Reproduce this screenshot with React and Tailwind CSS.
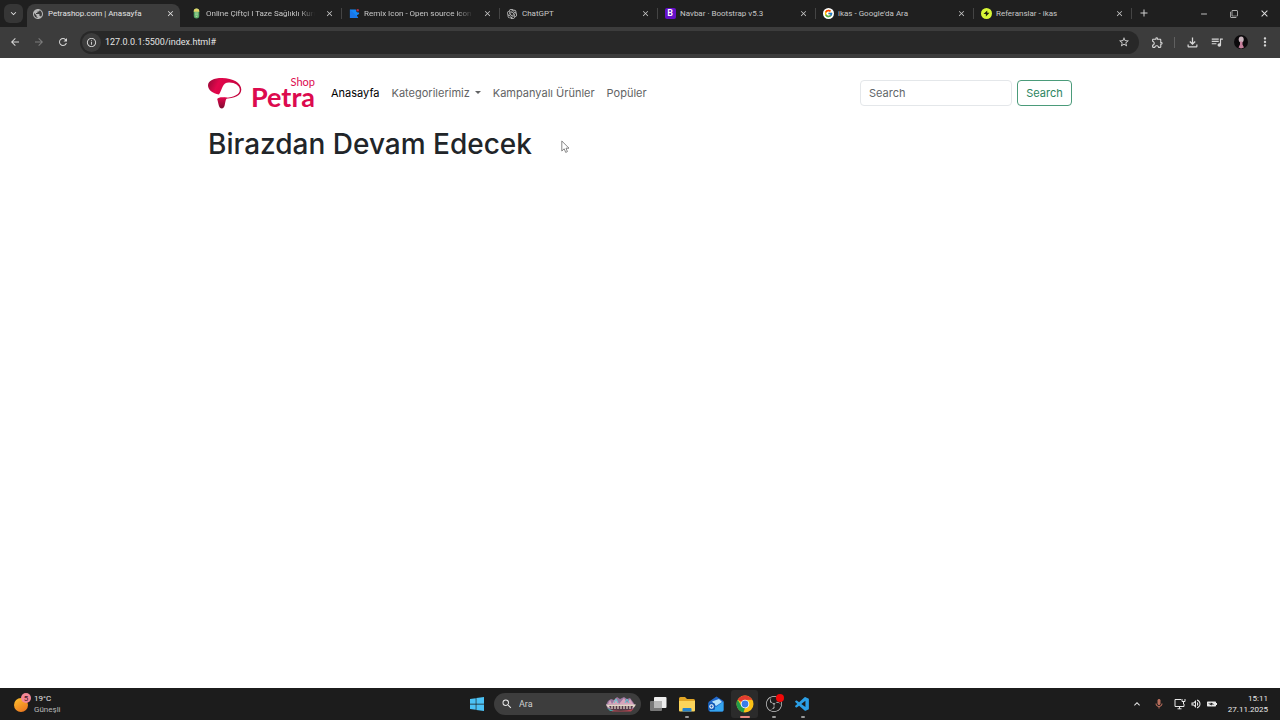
import { FaWindows } from 'react-icons/fa'
import { FcGoogle } from 'react-icons/fc'
import { SiObsstudio, SiOpenai } from 'react-icons/si'
import { VscVscode } from 'react-icons/vsc'
import {
  MdAdd, MdArrowBack, MdArrowForward, MdBatteryChargingFull, MdClose, MdFilterNone, MdInfoOutline,
  MdKeyboardArrowDown, MdKeyboardArrowUp, MdMoreVert, MdOutlineExtension, MdOutlineFileDownload,
  MdOutlineMic, MdOutlineVolumeUp, MdPublic, MdQueueMusic, MdRefresh, MdRemove, MdSearch, MdStarBorder,
} from 'react-icons/md'

function PearIcon() {
  return (
    <svg viewBox="0 0 12 12" className="size-[11px]" aria-hidden="true">
      <rect x="3" y="0.5" width="6" height="11" rx="3" fill="#58a967" />
      <path d="M3 4V3.5a3 3 0 0 1 6 0V4Z" fill="#e3d56b" />
      <path d="M4.4 5.5h3.2M4.4 7.5h3.2M5 9.4h2" stroke="#d5efb5" strokeWidth="0.8" />
    </svg>
  )
}

function RemixIcon() {
  return (
    <svg viewBox="0 0 12 12" className="size-[11px]" aria-hidden="true">
      <path d="M1 1.5h6.5C7.5 4 9 5 11 5v1.5L8.5 8l1.5 3H1Z" fill="#1687f5" />
      <path d="M1 1.5 8 8.5 10 11H1Z" fill="#1a76ea" />
      <circle cx="9.5" cy="2.4" r="1.4" fill="#a83245" />
    </svg>
  )
}

function BootstrapIcon() {
  return (
    <span className="flex size-[11px] items-center justify-center rounded-[2px] bg-[#6610c9] text-[9px] leading-none font-semibold text-white">
      B
    </span>
  )
}

function GoogleIcon() {
  return (
    <span className="flex size-[11px] items-center justify-center rounded-full bg-white">
      <FcGoogle className="size-[9px]" />
    </span>
  )
}

function IkasIcon() {
  return (
    <svg viewBox="0 0 12 12" className="size-[11px]" aria-hidden="true">
      <circle cx="6" cy="6" r="6" fill="#d9f936" />
      <path d="M6.8 2.6 2.8 6.5h2.5v2.7l4-3.900H6.8Z" fill="#1c2010" />
    </svg>
  )
}

const tabs = [
  { title: 'Petrashop.com | Anasayfa', icon: <MdPublic className="size-[12px] text-[#b8b8b8]" />, active: true },
  { title: 'Online Çiftçi I Taze Sağlıklı Kuru', icon: <PearIcon />, fade: true },
  { title: 'Remix Icon - Open source icon', icon: <RemixIcon />, fade: true },
  { title: 'ChatGPT', icon: <SiOpenai className="size-[10px] text-[#d5d5d5]" /> },
  { title: 'Navbar · Bootstrap v5.3', icon: <BootstrapIcon /> },
  { title: "ikas - Google'da Ara", icon: <GoogleIcon /> },
  { title: 'Referanslar - ikas', icon: <IkasIcon /> },
]

function Tab({ title, icon, active, fade }) {
  return (
    <div
      className={
        active
          ? 'mr-1 flex h-[23px] w-[153px] items-center rounded-t-lg bg-[#3c3c3c] pr-1 pb-1 pl-[5px] text-[#e3e3e3]'
          : 'flex h-[23px] w-[158px] items-center pr-[7px] pb-1 pl-[6px] text-[#c7c7c7]'
      }
    >
      <span className="flex w-3 shrink-0 justify-center">{icon}</span>
      <span
        className={
          fade
            ? 'ml-1 min-w-0 flex-1 mask-r-from-85% text-[8px] leading-[12px] whitespace-nowrap'
            : 'ml-1 min-w-0 flex-1 text-[8px] leading-[12px] whitespace-nowrap'
        }
      >
        {title}
      </span>
      <button type="button" aria-label={`Close ${title}`} className="ml-2 flex size-3 items-center justify-center">
        <MdClose className="size-[9px]" />
      </button>
      {!active && <span className="-mr-[7px] ml-[6px] h-[11px] w-px bg-[#444]" />}
    </div>
  )
}

function TabStrip() {
  return (
    <div className="flex h-[27px] items-end bg-[#1f1f1f]">
      <button
        type="button"
        aria-label="Search tabs"
        className="mr-1 mb-1 ml-1 flex h-[19px] w-[19px] items-center justify-center rounded-md bg-[#363636] text-[#e3e3e3]"
      >
        <MdKeyboardArrowDown className="size-[11px]" />
      </button>
      <div className="flex">
        {tabs.map((tab) => <Tab key={tab.title} {...tab} />)}
      </div>
      <button type="button" aria-label="New tab" className="mb-2 ml-[6px] text-[#d0d0d0]">
        <MdAdd className="size-3" />
      </button>
      <div className="mb-2 ml-auto flex items-center gap-[21px] pr-[10px] text-[#e0e0e0]">
        <button type="button" aria-label="Minimize"><MdRemove className="size-[10px]" /></button>
        <button type="button" aria-label="Restore"><MdFilterNone className="size-[8px]" /></button>
        <button type="button" aria-label="Close window"><MdClose className="size-[11px]" /></button>
      </div>
    </div>
  )
}

function Avatar() {
  return (
    <svg viewBox="0 0 14 14" className="size-[14px]" aria-hidden="true">
      <circle cx="7" cy="7" r="7" fill="#0c0a0c" />
      <ellipse cx="7.2" cy="4.5" rx="2.5" ry="2.9" fill="#c9b4bd" />
      <path d="M6 6.5h2.5v3L10 12.5 7 13.5l-2.500-1L6 9.5Z" fill="#c57f9b" />
    </svg>
  )
}

function Toolbar() {
  return (
    <div className="flex h-[31px] items-center bg-[#3c3c3c] px-2 pb-px text-[#d6d6d6]">
      <button type="button" aria-label="Back" className="flex w-6 pl-px"><MdArrowBack className="size-3" /></button>
      <button type="button" aria-label="Forward" className="flex w-6 pl-px text-[#7c7c7c]"><MdArrowForward className="size-3" /></button>
      <button type="button" aria-label="Reload" className="flex w-6 pl-px"><MdRefresh className="size-3" /></button>
      <div className="flex h-[23px] flex-1 items-center rounded-full bg-[#282828] pr-[9px] pl-[2px]">
        <span className="flex size-[19px] items-center justify-center rounded-full bg-[#3c3c3c]">
          <MdInfoOutline className="size-[11px]" />
        </span>
        <input
          aria-label="Address"
          defaultValue="127.0.0.1:5500/index.html#"
          className="ml-1 min-w-0 flex-1 bg-transparent text-[9px] leading-[14px] text-[#e3e3e3] outline-none"
        />
        <button type="button" aria-label="Bookmark"><MdStarBorder className="size-3" /></button>
      </div>
      <div className="flex items-center pl-3">
        <button type="button" aria-label="Extensions"><MdOutlineExtension className="size-[13px]" /></button>
        <span className="mr-[10px] ml-[10px] h-[11px] w-px bg-[#606060]" />
        <button type="button" aria-label="Downloads"><MdOutlineFileDownload className="size-[15px]" /></button>
        <button type="button" aria-label="Media" className="ml-[10px]"><MdQueueMusic className="size-[14px]" /></button>
        <button type="button" aria-label="Profile" className="ml-[10px]"><Avatar /></button>
        <button type="button" aria-label="Menu" className="ml-[10px]"><MdMoreVert className="size-[14px]" /></button>
      </div>
    </div>
  )
}

function Brand() {
  return (
    <a href="#" aria-label="Petra Shop" className="flex items-center text-[#dc0a4e]">
      <svg viewBox="0 0 34 32" className="h-8 w-[34px]" aria-hidden="true">
        <defs>
          <linearGradient id="petra" x1="0" y1="0" x2="1" y2="0.3">
            <stop offset="0" stopColor="#8f0b36" />
            <stop offset="0.35" stopColor="#e2074c" />
            <stop offset="1" stopColor="#c4053f" />
          </linearGradient>
          <linearGradient id="stem" x1="0" y1="0" x2="0" y2="1">
            <stop offset="0" stopColor="#e2074c" />
            <stop offset="1" stopColor="#7d0b30" />
          </linearGradient>
        </defs>
        <path d="M11 17.600C4.500 16 0 13 0 8.500 0 3.500 6 1 14 1c11 0 19.300 5 19.300 11.500 0 6-6.300 8.700-17.300 9.300l-2.500.6C14 20.500 15.500 20.800 18 20.700c8-.4 13.800-3.300 13.800-8C31.800 8.500 26.500 5.300 21 5.500c-7 .3-6 5.500-10 12.100Z" fill="url(#petra)" />
        <path d="M9.200 22c1.300-1.800 5-2 10-1.200-3 2.400-1.200 10.700-5.200 10.700-3.500 0-3.300-5-4.800-9.500Z" fill="url(#stem)" />
      </svg>
      <span className="ml-[9px] flex flex-col pb-[3px] font-['Lato'] font-bold">
        <span className="self-end text-[11px] leading-[11px] font-normal">Shop</span>
        <span className="text-[27px] leading-[19px]">Petra</span>
      </span>
    </a>
  )
}

function ShopHeader() {
  return (
    <nav className="flex flex-wrap items-center py-[10px] text-[11px] leading-4 text-[#626364]">
      <Brand />
      <ul className="ml-4 flex gap-3">
        <li><a href="#" aria-current="page" className="text-black">Anasayfa</a></li>
        <li>
          <button type="button" aria-haspopup="menu" className="flex items-center gap-[5px]">
            Kategorilerimiz
            <span className="border-x-[3px] border-t-[3px] border-x-transparent border-t-current" />
          </button>
        </li>
        <li><a href="#">Kampanyalı Ürünler</a></li>
        <li><a href="#">Popüler</a></li>
      </ul>
      <form className="ml-auto flex gap-[5px]" role="search" onSubmit={(event) => event.preventDefault()}>
        <input
          type="search"
          placeholder="Search"
          aria-label="Search"
          className="h-[26px] w-[152px] rounded-[4px] border border-[#e4e7ea] px-2 text-[#212529] outline-none placeholder:text-[#62666a]"
        />
        <button type="submit" className="h-[26px] w-[55px] rounded-[4px] border border-[#4b9b7a] text-[#2b8560]">Search</button>
      </form>
    </nav>
  )
}

function Pointer() {
  return (
    <svg viewBox="0 0 9 14" className="absolute top-[82px] left-[561px] h-[14px] w-[9px]" aria-hidden="true">
      <path d="M.8 1v10l2.400-2.200 1.500 3.600 1.700-.8L5 8.200h3Z" fill="#fff" stroke="#555" strokeWidth="0.7" />
    </svg>
  )
}

function ChromeIcon() {
  return (
    <svg viewBox="0 0 18 18" className="size-[18px]" aria-hidden="true">
      <circle cx="9" cy="9" r="8.5" fill="#fbc116" />
      <path d="M9 9 1.640 4.750A8.500 8.500 0 0 1 16.360 4.750L9 5Z" fill="#e43d30" />
      <path d="M1.640 4.750 5.500 11l3.500 2-1.500 4.400A8.500 8.500 0 0 1 1.640 4.750Z" fill="#229c4b" />
      <circle cx="9" cy="9" r="4.3" fill="#fff" />
      <circle cx="9" cy="9" r="3.4" fill="#3a7ce8" />
    </svg>
  )
}

function FolderIcon() {
  return (
    <svg viewBox="0 0 18 18" className="size-[18px]" aria-hidden="true">
      <path d="M1 3.500A1.500 1.500 0 0 1 2.500 2H7l2 2h6.500A1.500 1.500 0 0 1 17 5.500V9H1Z" fill="#e2a626" />
      <path d="M1 6h16v9.500a1 1 0 0 1-1 1H2a1 1 0 0 1-1-1Z" fill="#fbd45a" />
      <path d="M4.500 16.500V14a1 1 0 0 1 1-1h7a1 1 0 0 1 1 1v2.500Z" fill="#2683cc" />
    </svg>
  )
}

function MailIcon() {
  return (
    <svg viewBox="0 0 18 18" className="size-[18px]" aria-hidden="true">
      <path d="M1.500 7 9.500 1.500 16.500 6v9a1.500 1.500 0 0 1-1.500 1.500H3A1.500 1.500 0 0 1 1.500 15Z" fill="#2169cc" />
      <path d="M5 6.500 12 4l3 3-6 4Z" fill="#b7e4fb" />
      <path d="M1.500 8 9 12l7.500-5.500V15a1.500 1.500 0 0 1-1.500 1.500H3Z" fill="#35a5ef" />
      <rect x="1" y="8" width="7" height="7" rx="1.5" fill="#1059b4" />
      <circle cx="4.500" cy="11.500" r="1.700" fill="none" stroke="#fff" strokeWidth="1.1" />
    </svg>
  )
}

function TaskViewIcon() {
  return (
    <svg viewBox="0 0 18 18" className="size-[18px]" aria-hidden="true">
      <rect x="1" y="6" width="12" height="10" rx="1" fill="#777" />
      <rect x="5" y="2" width="12.500" height="11" rx="1" fill="#eee" />
      <path d="M5 6h8v7H5Z" fill="#b8b8b8" />
    </svg>
  )
}

function ObsIcon() {
  return (
    <span className="relative flex">
      <SiObsstudio className="size-4 text-[#c9c9c9]" />
      <span className="absolute -top-[2px] -right-[2px] size-2 rounded-full bg-[#f10808]" />
    </span>
  )
}

function SkylineIcon() {
  return (
    <svg viewBox="0 0 32 16" className="h-4 w-8" aria-hidden="true">
      <path d="M1 9 3 5l3-2 3 1 3-3 3 2 4-2 3 2 3-1 3 4 2 3-2 4H3Z" fill="#98779f" />
      <path d="M3 8 5 4l2 4 4-6 3 6 5-6 3 5 3-4 4 6Z" fill="#d7a4bb" />
      <path d="M9 7l2-4 2 4M20 7l2-4 2 4" stroke="#5cc5d0" strokeWidth="1" fill="none" />
      <path d="M1 8.500h30l-2 3H3Z" fill="#e4d6c8" />
      <path d="M4 10h24l-2 4H7Z" fill="#543847" />
      <path d="M7 10v3M10 10v3M13 10v3M16 10v3M19 10v3M22 10v3M25 10v3" stroke="#eadbd1" strokeWidth="1.2" />
      <path d="M3 12.500c6 3 19 3 26 0l-3 3H7Z" fill="#b74552" />
      <path d="m2 12 3 3h4Z" fill="#42a6a9" />
    </svg>
  )
}

const apps = [
  { name: 'Task view', icon: <TaskViewIcon /> },
  { name: 'File Explorer', icon: <FolderIcon />, mark: 'bg-[#999]' },
  { name: 'Mail', icon: <MailIcon /> },
  { name: 'Chrome', icon: <ChromeIcon />, mark: 'bg-[#e88a80]', active: true },
  { name: 'OBS Studio', icon: <ObsIcon />, mark: 'bg-[#999]' },
  { name: 'Visual Studio Code', icon: <VscVscode className="size-[17px] text-[#2b9fe6]" />, mark: 'bg-[#999]' },
]

function WeatherIcon() {
  return (
    <svg viewBox="0 0 20 22" className="h-[22px] w-5" aria-hidden="true">
      <defs>
        <linearGradient id="sun" x1="0" y1="0" x2="0.6" y2="1">
          <stop offset="0" stopColor="#ffc22e" />
          <stop offset="1" stopColor="#ec7b20" />
        </linearGradient>
      </defs>
      <circle cx="8" cy="12" r="7" fill="url(#sun)" />
      <circle cx="13" cy="5" r="5" fill="#f38796" />
      <text x="13" y="8" textAnchor="middle" fontSize="8" fill="#40151c">5</text>
    </svg>
  )
}

function NetworkIcon() {
  return (
    <svg viewBox="0 0 12 12" className="size-3" fill="none" stroke="currentColor" aria-hidden="true">
      <path d="M7 1.500H1v7h9V6M3.500 10.800h4M5.500 8.500v2.300M9.500 6V4M8 1v2.500h3V1" />
    </svg>
  )
}

function Taskbar() {
  return (
    <footer className="grid h-8 grid-cols-[1fr_auto_1fr] items-center bg-[#1c1c1c] text-[8px] leading-[11px] text-[#e8e8e8]">
      <div className="flex items-center gap-px pl-[13px]">
        <WeatherIcon />
        <div>
          <div>19°C</div>
          <div className="text-[#b8b8b8]">Güneşli</div>
        </div>
      </div>
      <div className="flex items-center pl-[6px]">
        <button type="button" aria-label="Start" className="mr-[9px]"><FaWindows className="size-4 text-[#4cc2f5]" /></button>
        <label className="mr-[2px] flex h-[22px] w-[147px] items-center rounded-full bg-[#3d3d3d] pr-1 pl-[7px]">
          <MdSearch className="size-3 shrink-0" />
          <input
            aria-label="Ara"
            placeholder="Ara"
            className="ml-[6px] min-w-0 flex-1 bg-transparent text-[9px] outline-none placeholder:text-[#d0d0d0]"
          />
          <SkylineIcon />
        </label>
        {apps.map(({ name, icon, mark, active }) => (
          <button
            key={name}
            type="button"
            aria-label={name}
            className={
              active
                ? 'relative mx-px flex h-7 w-[27px] items-center justify-center rounded-[3px] bg-[#2b2b2b]'
                : 'relative mx-px flex h-7 w-[27px] items-center justify-center'
            }
          >
            {icon}
            {mark && <span className={`absolute bottom-0 h-[2px] rounded-full ${active ? 'w-[10px]' : 'w-1'} ${mark}`} />}
          </button>
        ))}
      </div>
      <div className="flex items-center justify-end pr-3">
        <MdKeyboardArrowUp className="size-3" />
        <MdOutlineMic className="ml-[10px] size-3 text-[#b96e5c]" />
        <span className="mr-1 ml-[9px]"><NetworkIcon /></span>
        <MdOutlineVolumeUp className="mr-1 size-3" />
        <MdBatteryChargingFull className="size-3 rotate-90" />
        <div className="ml-[10px] text-right">
          <div>15:11</div>
          <div>27.11.2025</div>
        </div>
      </div>
    </footer>
  )
}

export default function App() {
  return (
    <div className="flex min-h-screen flex-col bg-white font-['Roboto',sans-serif]">
      <header>
        <TabStrip />
        <Toolbar />
      </header>
      <main className="relative flex-1 px-4 pt-2 font-['Inter',sans-serif]">
        <div className="mx-auto max-w-[864px]">
          <ShopHeader />
          <h1 className="mt-2 text-[28px] leading-[34px] font-medium text-[#212529]">Birazdan Devam Edecek</h1>
        </div>
        <Pointer />
      </main>
      <Taskbar />
    </div>
  )
}
